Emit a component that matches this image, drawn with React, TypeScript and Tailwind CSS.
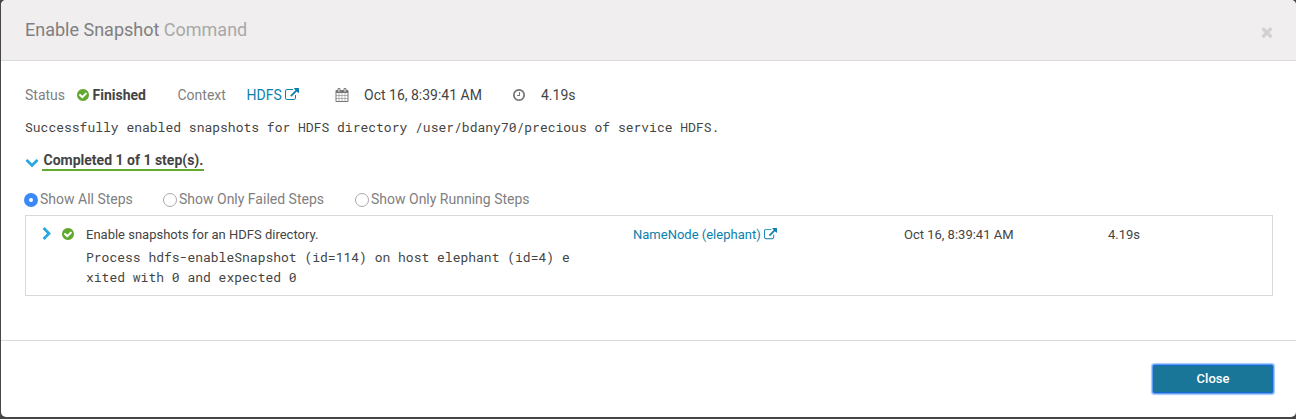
import React from "react";

const PATHS = {
  external:
    "M1408 928v320q0 119-84.5 203.5t-203.5 84.5h-832q-119 0-203.5-84.5t-84.5-203.5v-832q0-119 84.5-203.5t203.5-84.5h704q14 0 23 9t9 23v64q0 14-9 23t-23 9h-704q-66 0-113 47t-47 113v832q0 66 47 113t113 47h832q66 0 113-47t47-113v-320q0-14 9-23t23-9h64q14 0 23 9t9 23zm384-864v512q0 26-19 45t-45 19-45-19l-176-176-652 652q-10 10-23 10t-23-10l-114-114q-10-10-10-23t10-23l652-652-176-176q-19-19-19-45t19-45 45-19h512q26 0 45 19t19 45z",
  check:
    "M1412 734q0-28-18-46l-91-90q-19-19-45-19t-45 19l-408 407-226-226q-19-19-45-19t-45 19l-91 90q-18 18-18 46 0 27 18 45l362 362q19 19 45 19 27 0 46-19l543-543q18-18 18-45zm252 162q0 209-103 385.5t-279.5 279.5-385.5 103-385.5-103-279.5-279.5-103-385.5 103-385.5 279.5-279.5 385.5-103 385.5 103 279.5 279.5 103 385.5z",
  clock:
    "M1024 544v448q0 14-9 23t-23 9h-320q-14 0-23-9t-9-23v-64q0-14 9-23t23-9h224v-352q0-14 9-23t23-9h64q14 0 23 9t9 23zm416 352q0-148-73-273t-198-198-273-73-273 73-198 198-73 273 73 273 198 198 273 73 273-73 198-198 73-273zm224 0q0 209-103 385.5t-279.5 279.5-385.5 103-385.5-103-279.5-279.5-103-385.5 103-385.5 279.5-279.5 385.5-103 385.5 103 279.5 279.5 103 385.5z",
  calendar:
    "M192 1664h288v-288h-288v288zm352 0h320v-288h-320v288zm-352-352h288v-320h-288v320zm352 0h320v-320h-320v320zm-352-384h288v-288h-288v288zm736 736h320v-288h-320v288zm-384-736h320v-288h-320v288zm768 736h288v-288h-288v288zm-384-352h320v-320h-320v320zm-352-864v-288q0-13-9.5-22.5t-22.5-9.5h-64q-13 0-22.5 9.5t-9.5 22.5v288q0 13 9.5 22.5t22.5 9.5h64q13 0 22.5-9.5t9.5-22.5zm736 864h288v-320h-288v320zm-384-384h320v-288h-320v288zm384 0h288v-288h-288v288zm32-480v-288q0-13-9.5-22.5t-22.5-9.5h-64q-13 0-22.5 9.5t-9.5 22.5v288q0 13 9.5 22.5t22.5 9.5h64q13 0 22.5-9.5t9.5-22.5zm384-64v1280q0 52-38 90t-90 38h-1408q-52 0-90-38t-38-90v-1280q0-52 38-90t90-38h128v-96q0-66 47-113t113-47h64q66 0 113 47t47 113v96h384v-96q0-66 47-113t113-47h64q66 0 113 47t47 113v96h128q52 0 90 38t38 90z",
  down: "M1683 808l-742 741q-19 19-45 19t-45-19l-742-741q-19-19-19-45.5t19-45.5l166-165q19-19 45-19t45 19l531 531 531-531q19-19 45-19t45 19l166 165q19 19 19 45.5t-19 45.5z",
  right:
    "M1363 877l-742 742q-19 19-45 19t-45-19l-166-166q-19-19-19-45t19-45l531-531-531-531q-19-19-19-45t19-45l166-166q19-19 45-19t45 19l742 742q19 19 19 45t-19 45z",
  times:
    "M1490 1322q0 40-28 68l-136 136q-28 28-68 28t-68-28l-294-294-294 294q-28 28-68 28t-68-28l-136-136q-28-28-28-68t28-68l294-294-294-294q-28-28-28-68t28-68l136-136q28-28 68-28t68 28l294 294 294-294q28-28 68-28t68 28l136 136q28 28 28 68t-28 68l-294 294 294 294q28 28 28 68z",
};

function Icon({ name, className = "size-3.5" }: { name: keyof typeof PATHS; className?: string }) {
  return (
    <svg viewBox="0 0 1792 1792" fill="currentColor" className={`shrink-0 overflow-visible ${className}`}>
      <path d={PATHS[name]} />
    </svg>
  );
}

function Radio({ label, checked, className }: { label: string; checked?: boolean; className: string }) {
  return (
    <label className={`flex shrink-0 items-center gap-0.5 ${className}`}>
      <span
        className={`mt-px flex size-3.5 shrink-0 items-center justify-center rounded-full ${
          checked ? "bg-[#3b88f7]" : "border border-[#a9a9a9] bg-white"
        }`}
      >
        {checked && <span className="size-1 rounded-full bg-white" />}
      </span>
      <span className="whitespace-nowrap">{label}</span>
    </label>
  );
}

export default function App() {
  return (
    <div className="h-[419px] w-[1296px] overflow-hidden bg-[#464646] pb-0.5 pl-px font-['Roboto',sans-serif] text-sm leading-5 text-[#444]">
      <div className="flex h-full flex-col overflow-hidden rounded-[5px] bg-white">
        <header className="flex h-[61px] shrink-0 items-center justify-between border-b border-[#dadada] bg-[#f0eeef] pr-[21px] pl-6">
          <h1 className="text-lg text-[#808080]">
            Enable Snapshot <span className="text-[#a8a8a8]">Command</span>
          </h1>
          <button aria-label="Dismiss" className="mt-1 text-[#d3d1d2]">
            <Icon name="times" className="size-4" />
          </button>
        </header>

        <main className="flex h-[279px] shrink-0 flex-col pt-6 pr-[22px] pl-6">
          <div className="flex h-5 items-center whitespace-nowrap">
            <span className="w-[51px] text-[#808080]">Status</span>
            <Icon name="check" className="size-3.5 text-[#62a931]" />
            <span className="ml-[2.5px] w-[85px] font-bold">Finished</span>
            <span className="w-[69px] text-[#808080]">Context</span>
            <a className="flex w-[88.5px] items-center gap-[3.5px] text-[#0b7fad]">
              HDFS <Icon name="external" />
            </a>
            <Icon name="calendar" className="size-3.5 text-[#777]" />
            <span className="ml-[15px] w-[148px]">Oct 16, 8:39:41 AM</span>
            <Icon name="clock" className="size-3.5 text-[#777]" />
            <span className="ml-[15px]">4.19s</span>
          </div>

          <p className="mt-3 h-5 font-['Roboto_Mono','Liberation_Mono',monospace] text-[13px] whitespace-pre">
            Successfully enabled snapshots for HDFS directory /user/bdany70/precious of service HDFS.
          </p>

          <div className="mt-[13px] flex h-[21px] items-start">
            <Icon name="down" className="mt-[5px] size-3.5 text-[#29a7de]" />
            <span className="ml-[3px] h-[21px] border-b-2 border-[#62a931] pr-[0.5px] pl-[1.5px] font-bold whitespace-nowrap">
              Completed 1 of 1 step(s).
            </span>
          </div>

          <div className="mt-[18px] -ml-px flex h-5 text-[#808080]">
            <Radio label="Show All Steps" checked className="w-[139px]" />
            <Radio label="Show Only Failed Steps" className="w-[192px]" />
            <Radio label="Show Only Running Steps" className="" />
          </div>

          <section className="mt-1.5 flex h-[81px] w-[1248px] shrink-0 border border-[#d9d9d9] pt-[9px] pl-3.5 text-[13px]">
            <Icon name="right" className="mt-0.5 size-3.5 text-[#29a7de]" />
            <Icon name="check" className="mt-0.5 ml-[7px] size-3.5 text-[#62a931]" />
            <div className="ml-[11px] w-[547px]">
              <div className="h-[22px] leading-5">Enable snapshots for an HDFS directory.</div>
              <p className="w-[486px] font-['Roboto_Mono','Liberation_Mono',monospace] break-all whitespace-pre-wrap">
                Process hdfs-enableSnapshot (id=114) on host elephant (id=4) exited with 0 and expected 0
              </p>
            </div>
            <a className="flex h-5 w-[271px] items-center gap-[3.5px] text-[#0b7fad]">
              NameNode (elephant) <Icon name="external" className="mb-0.5 size-[13px]" />
            </a>
            <span className="w-[204px]">Oct 16, 8:39:41 AM</span>
            <span>4.19s</span>
          </section>
        </main>

        <footer className="flex grow justify-end border-t border-[#dadada] pt-6 pr-[22px]">
          <button className="mr-px flex h-7 w-[120px] items-center justify-center rounded-[2px] bg-[#1a7698] text-[13px] font-medium text-white shadow-[inset_0_0_0_1px_#1b6bc8,0_0_0_1px_#5b9cf8,0_0_1px_1.5px_#a5c9fb]">
            Close
          </button>
        </footer>
      </div>
    </div>
  );
}
